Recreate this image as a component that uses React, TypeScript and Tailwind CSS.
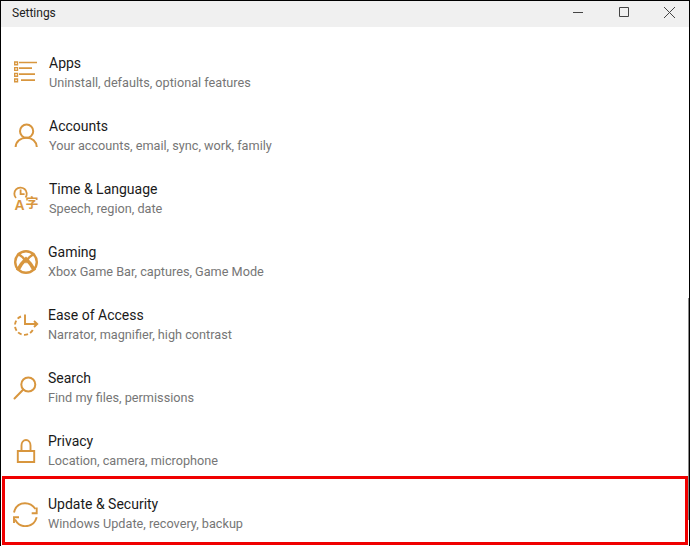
import React from "react";

const iconClass = "w-[26px] h-[26px] shrink-0 text-[#d8963e]";

const AppsIcon = () => (
  <svg viewBox="0 0 26 26" className={iconClass} fill="none" stroke="currentColor" strokeWidth="1.7">
    <path d="M6 2.500h18M6 8.200h13M6 14.200h16M8 20.200h14" />
    <path d="M1.700 2h2.800v2.800H1.700zM1.700 7.600h2.800v2.800H1.700zM1.700 13.400h2.800v2.800H1.700zM1.700 19h2.800v2.800H1.700z" strokeWidth="1.400" />
  </svg>
);

const AccountsIcon = () => (
  <svg viewBox="0 0 26 26" className={iconClass} fill="none" stroke="currentColor" strokeWidth="2">
    <circle cx="13.600" cy="8.200" r="6.600" />
    <path d="M2.600 24C3 18.500 7.500 14.800 13.400 14.800S23.400 18.500 23.800 24" />
  </svg>
);

const TimeIcon = () => (
  <svg viewBox="0 0 26 26" className={iconClass} fill="none" stroke="currentColor">
    <path d="M12.500 11.500A6.200 6.200 0 1 0 3 12" strokeWidth="1.800" />
    <path d="M7.600 3.500v4.600h4" strokeWidth="1.800" />
    <text x="1.500" y="23.800" fontSize="14" fontWeight="700" fill="currentColor" stroke="none" fontFamily="'Liberation Sans', sans-serif">A</text>
    <text x="12.500" y="20.500" fontSize="13" fontWeight="700" fill="currentColor" stroke="none" fontFamily="'Noto Sans CJK SC', sans-serif">字</text>
  </svg>
);

const GamingIcon = () => (
  <svg viewBox="0 0 26 26" className={iconClass} fill="none" stroke="currentColor" strokeWidth="2.400">
    <circle cx="13" cy="13" r="10.800" />
    <path d="M4.500 4.500Q10 7.500 13 12.500 16 7.500 21.500 4.500" strokeWidth="2.400" />
    <path d="M4.500 21.500Q7.500 15 13 10 18.500 15 21.500 21.500" strokeWidth="3.600" />
  </svg>
);

const EaseIcon = () => (
  <svg viewBox="0 0 26 26" className={iconClass} fill="none" stroke="currentColor" strokeWidth="1.900">
    <path d="M8 4.500A9.500 9.500 0 1 0 20 17.500" strokeDasharray="4 2.400" />
    <path d="M12 2.500V12H24M21 9l3.200 3-3.200 3" />
  </svg>
);

const SearchIcon = () => (
  <svg viewBox="0 0 26 26" className={iconClass} fill="none" stroke="currentColor" strokeWidth="2">
    <circle cx="15.300" cy="9.500" r="7" />
    <path d="M10.300 14.500 1.500 23.500" strokeLinecap="round" />
  </svg>
);

const PrivacyIcon = () => (
  <svg viewBox="0 0 26 26" className={iconClass} fill="none" stroke="currentColor" strokeWidth="1.900">
    <path d="M4.800 13h16.400v11H4.800z" />
    <path d="M8.500 13V7.500a4.500 5.500 0 0 1 9 0V13" />
  </svg>
);

const UpdateIcon = () => (
  <svg viewBox="0 0 26 26" className={iconClass} fill="none" stroke="currentColor" strokeWidth="1.900">
    <path d="M1 11.500C2.500 5 7 2.200 12 2.200 16.500 2.200 20 4.500 22.500 8" />
    <path d="M23.700 6.500V12.200H18.700" />
    <path d="M23.700 16.200C22 22.500 17 25.200 12 25.200 8 25.200 4.500 23 2 18.500" />
    <path d="M1 22V16.200H6" />
  </svg>
);

const rows = [
  { title: "Apps", sub: "Uninstall, defaults, optional features", icon: <AppsIcon />, gap: "gap-[10px]" },
  { title: "Accounts", sub: "Your accounts, email, sync, work, family", icon: <AccountsIcon />, gap: "gap-[10px]" },
  { title: "Time & Language", sub: "Speech, region, date", icon: <TimeIcon />, gap: "gap-[10px]" },
  { title: "Gaming", sub: "Xbox Game Bar, captures, Game Mode", icon: <GamingIcon />, gap: "gap-[9px]" },
  { title: "Ease of Access", sub: "Narrator, magnifier, high contrast", icon: <EaseIcon />, gap: "gap-[9px]" },
  { title: "Search", sub: "Find my files, permissions", icon: <SearchIcon />, gap: "gap-[9px]" },
  { title: "Privacy", sub: "Location, camera, microphone", icon: <PrivacyIcon />, gap: "gap-[9px]" },
];

const RowText = ({ title, sub }: { title: string; sub: string }) => (
  <div className="flex flex-col">
    <span className="text-[14px] leading-[19px] text-[#1a1a1a]">{title}</span>
    <span className="text-[12.7px] leading-[19px] text-[#767676]">{sub}</span>
  </div>
);

export default function App() {
  return (
    <div className="relative w-[690px] h-[546px] bg-white border-l border-t border-r border-black overflow-hidden font-['Roboto','Noto_Sans',sans-serif]">
      <div className="h-[26px] bg-[#f0f0f0] flex items-center justify-between pl-[11px]">
        <span className="text-[12px] leading-[22px] pb-[3px] text-[#222]">Settings</span>
        <div className="flex items-center h-full pb-[4px] text-[#444]">
          <svg viewBox="0 0 10 10" className="w-[10px] h-[10px] mr-[36px]" stroke="currentColor" fill="none">
            <path d="M0 5.500h10" />
          </svg>
          <svg viewBox="0 0 10 10" className="w-[10px] h-[10px] mr-[35px]" stroke="currentColor" fill="none">
            <path d="M.5.500h9v9h-9z" />
          </svg>
          <svg viewBox="0 0 11 11" className="w-[11px] h-[11px] mr-[14px]" stroke="currentColor" fill="none">
            <path d="M0 0l11 11M11 0 0 11" />
          </svg>
        </div>
      </div>
      <div className="pt-[14px]">
        {rows.map((r) => (
          <div key={r.title} className={`flex items-center h-[63px] pl-[12px] ${r.gap}`}>
            {r.icon}
            <RowText title={r.title} sub={r.sub} />
          </div>
        ))}
        <div className="mt-[-6px] ml-[1px] mr-[1px] border-[3px] border-[#f00000] h-[69px] flex items-center pl-[8px] pt-[6px] gap-[9px]">
          <UpdateIcon />
          <RowText title="Update & Security" sub="Windows Update, recovery, backup" />
        </div>
      </div>
      <div className="absolute right-0 top-[297px] w-px h-[222px] bg-[#8a8a8a]" />
    </div>
  );
}
